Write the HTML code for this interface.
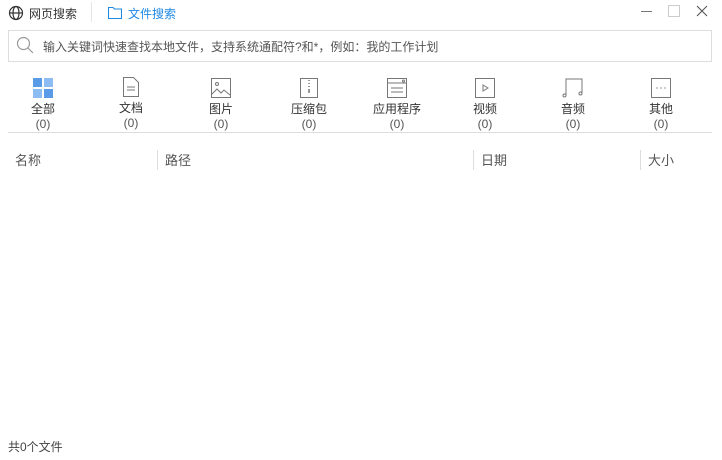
<!DOCTYPE html><html><head><meta charset="utf-8"><style>
body{margin:0;width:722px;height:460px;background:#fff;font-family:"Liberation Sans","Noto Sans CJK SC",sans-serif;font-size:12px;color:#333;position:relative;overflow:hidden}
.a{position:absolute}
.cat{position:absolute;top:78px;width:80px;text-align:center}
.cat svg{display:block;margin:0 auto}
.cat .l{margin-top:4px;line-height:15px}
.cat .n{line-height:15px;color:#555}
.h{position:absolute;top:150px;font-size:13px;color:#555}
.sep{position:absolute;top:150px;width:1px;height:20px;background:#ddd}
</style></head><body>
<svg class="a" style="left:8px;top:5px" width="16" height="16" viewBox="0 0 16 16" fill="none" stroke="#333" stroke-width="1.2"><circle cx="8" cy="8" r="6.5"/><ellipse cx="8" cy="8" rx="3" ry="6.5"/><line x1="1.5" y1="8" x2="14.5" y2="8"/></svg>
<div class="a" style="left:29px;top:5px;font-size:12px;color:#333">网页搜索</div>
<div class="a" style="left:91px;top:2px;width:1px;height:20px;background:#e5e5e5"></div>
<svg class="a" style="left:108px;top:6px" width="14" height="13" viewBox="0 0 14 13" fill="none" stroke="#1e88e5" stroke-width="1.1"><path d="M0.5 1.5h4.5l1.5 1.5h7v9.5h-13z"/></svg>
<div class="a" style="left:128px;top:5px;color:#1e88e5">文件搜索</div>
<div class="a" style="left:641px;top:11px;width:11px;height:1px;background:#777"></div>
<div class="a" style="left:668px;top:5px;width:10px;height:10px;border:1px solid #ccc"></div>
<svg class="a" style="left:696px;top:5px" width="12" height="12" viewBox="0 0 12 12" stroke="#555" stroke-width="1.1"><path d="M1 1L11 11M11 1L1 11"/></svg>
<div class="a" style="left:8px;top:30px;width:702px;height:30px;border:1px solid #ddd"></div>
<svg class="a" style="left:16px;top:36px" width="18" height="18" viewBox="0 0 18 18" fill="none" stroke="#999" stroke-width="1.2"><circle cx="7.5" cy="7.5" r="6"/><line x1="12" y1="12" x2="17" y2="17"/></svg>
<div class="a" style="left:43px;top:38px;color:#555">输入关键词快速查找本地文件，支持系统通配符?和*，例如：我的工作计划</div>

<div class="cat" style="left:3px"><svg width="22" height="20" viewBox="0 0 22 20"><rect x="1" y="0" width="9" height="9" fill="#5a9be8"/><rect x="12" y="0" width="9" height="9" fill="#8dbcf2"/><rect x="1" y="11" width="9" height="9" fill="#8dbcf2"/><rect x="12" y="11" width="9" height="9" fill="#5a9be8"/></svg><div class="l">全部</div><div class="n">(0)</div></div>
<div class="cat" style="left:91px;top:77px"><svg width="20" height="20" viewBox="0 0 20 20" fill="none" stroke="#777"><path d="M2.5 .5h10l5 5v14h-15z"/><path d="M6 10h8M6 13h8"/></svg><div class="l">文档</div><div class="n">(0)</div></div>
<div class="cat" style="left:181px"><svg width="20" height="20" viewBox="0 0 20 20" fill="none" stroke="#777"><rect x=".5" y=".5" width="19" height="19"/><circle cx="6" cy="6" r="1.5"/><path d="M1 16l5-5 4 4 3-3 6 5"/></svg><div class="l">图片</div><div class="n">(0)</div></div>
<div class="cat" style="left:269px"><svg width="20" height="20" viewBox="0 0 20 20" fill="none" stroke="#777"><rect x="1.5" y=".5" width="17" height="19"/><path d="M10 2v1M10 5v1M10 8v1M10 11v4" stroke-width="1.5"/></svg><div class="l">压缩包</div><div class="n">(0)</div></div>
<div class="cat" style="left:357px"><svg width="20" height="20" viewBox="0 0 20 20" fill="none" stroke="#777"><rect x=".5" y=".5" width="19" height="19"/><path d="M1 5h18M4 10h12M4 14h12"/><circle cx="16.5" cy="3" r="1"/></svg><div class="l">应用程序</div><div class="n">(0)</div></div>
<div class="cat" style="left:445px"><svg width="20" height="20" viewBox="0 0 20 20" fill="none" stroke="#777"><rect x=".5" y=".5" width="19" height="19"/><path d="M8 7l5 3-5 3z"/></svg><div class="l">视频</div><div class="n">(0)</div></div>
<div class="cat" style="left:533px"><svg width="22" height="20" viewBox="0 0 22 20" fill="none" stroke="#777"><path d="M4 17V1h16v14"/><circle cx="2.5" cy="17.5" r="1.5"/><circle cx="18.5" cy="15.5" r="1.5"/></svg><div class="l">音频</div><div class="n">(0)</div></div>
<div class="cat" style="left:621px"><svg width="20" height="20" viewBox="0 0 20 20" fill="none" stroke="#777"><rect x=".5" y=".5" width="19" height="19"/><path d="M5.5 10h1M9.5 10h1M13.5 10h1" stroke-width="1.5"/></svg><div class="l">其他</div><div class="n">(0)</div></div>
<div class="a" style="left:8px;top:132px;width:704px;height:1px;background:#ddd"></div>

<div class="h" style="left:15px">名称</div>
<div class="sep" style="left:157px"></div><div class="h" style="left:165px">路径</div>
<div class="sep" style="left:473px"></div><div class="h" style="left:481px">日期</div>
<div class="sep" style="left:640px"></div><div class="h" style="left:648px">大小</div>
<div class="a" style="left:8px;top:438px;color:#444">共0个文件</div>
</body></html>
